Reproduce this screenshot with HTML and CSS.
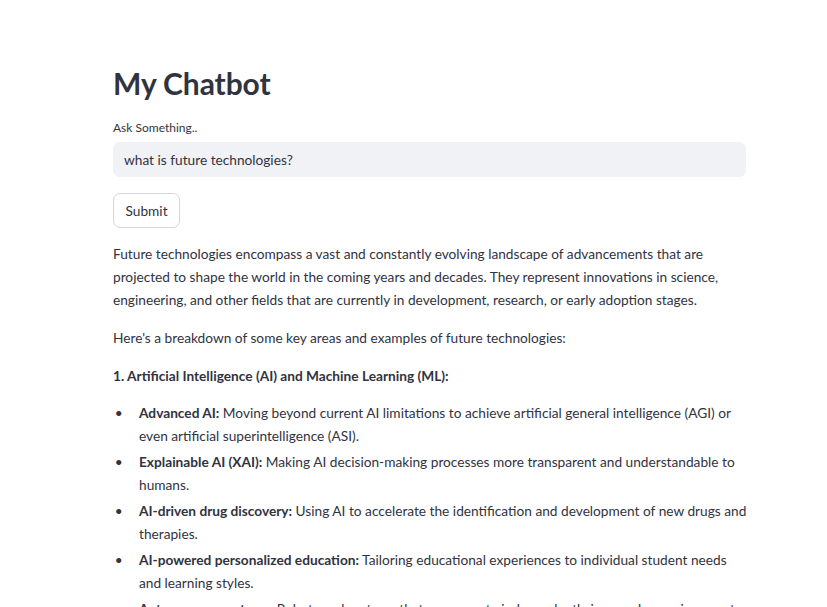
FILE: index.html
```html
<!DOCTYPE html>
<html>
<head>
<meta charset="utf-8">
<link rel="stylesheet" href="styles.css">
</head>
<body>
<div class="page">
  <main class="content">
    <h1 class="title">My Chatbot</h1>
    <label class="label">Ask Something..</label>
    <div class="input">what is future technologies?</div>
    <button class="btn">Submit</button>
    <p class="para">Future technologies encompass a vast and constantly evolving landscape of advancements that are projected to shape the world in the coming years and decades. They represent innovations in science, engineering, and other fields that are currently in development, research, or early adoption stages.</p>
    <p class="para">Here's a breakdown of some key areas and examples of future technologies:</p>
    <p class="para"><strong>1. Artificial Intelligence (AI) and Machine Learning (ML):</strong></p>
    <ul class="list">
      <li><strong>Advanced AI:</strong> Moving beyond current AI limitations to achieve artificial general intelligence (AGI) or even artificial superintelligence (ASI).</li>
      <li><strong>Explainable AI (XAI):</strong> Making AI decision-making processes more transparent and understandable to humans.</li>
      <li><strong>AI-driven drug discovery:</strong> Using AI to accelerate the identification and development of new drugs and therapies.</li>
      <li><strong>AI-powered personalized education:</strong> Tailoring educational experiences to individual student needs and learning styles.</li>
      <li><strong>Autonomous systems:</strong> Robots and systems that can operate independently in complex environments.</li>
    </ul>
  </main>
</div>
</body>
</html>
```
FILE: styles.css
```css
html, body {
  margin: 0;
  padding: 0;
  background: #ffffff;
}
body {
  font-family: Lato, "Noto Sans", sans-serif;
  color: #31333f;
  overflow: hidden;
  height: 607px;
}
.page {
  display: flex;
  padding-left: 113px;
}
.content {
  width: 636px;
  display: flex;
  flex-direction: column;
  align-items: flex-start;
  padding-top: 62px;
}
.title {
  font-size: 30px;
  font-weight: 700;
  line-height: 42px;
  margin: 0 0 16px 0;
  letter-spacing: -0.1px;
}
.label {
  font-size: 12px;
  line-height: 16px;
  margin-bottom: 6px;
}
.input {
  box-sizing: border-box;
  width: 633px;
  height: 35px;
  background: #f0f2f6;
  border-radius: 7px;
  padding: 0 11px;
  font-size: 13.7px;
  line-height: 35px;
}
.btn {
  margin-top: 16px;
  height: 35px;
  padding: 0 11.5px;
  border: 1px solid #d5d6da;
  border-radius: 7px;
  background: #fff;
  color: #31333f;
  font-family: inherit;
  font-size: 13.7px;
}
.para {
  font-size: 13.7px;
  line-height: 23px;
  margin: 14px 0 0 0;
  max-width: 633px;
}
.para + .para {
  margin-top: 15px;
}
.list {
  font-size: 13.7px;
  line-height: 23px;
  margin: 14px 0 0 0;
  padding-left: 26px;
}
.list li {
  margin-bottom: 3px;
}
.list li::marker {
  content: "\2022\2003\2009\2009\2009\200A";
}
```
